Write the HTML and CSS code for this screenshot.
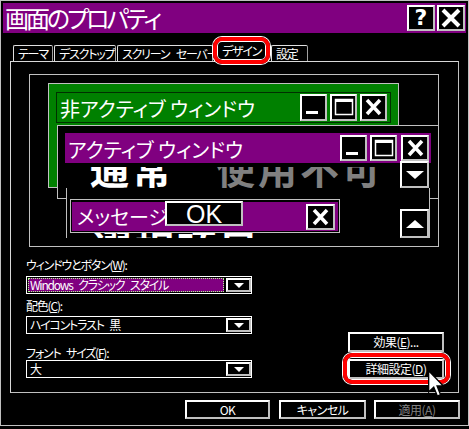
FILE: index.html
```html
<!DOCTYPE html>
<html lang="ja">
<head>
  <meta charset="UTF-8" />
  <title>画面のプロパティ</title>
  <link rel="stylesheet" href="styles.css">
</head>
<body>
  <div class="window">
    <div class="titlebar">
      <span class="title">画面のプロパティ</span>
      <div class="caption-btns">
        <span class="cap-btn help">?</span>
        <span class="cap-btn"><svg width="24" height="22" viewBox="0 0 24 22"><path d="M4 3 L20 19 M20 3 L4 19" stroke="#fff" stroke-width="4"/></svg></span>
      </div>
    </div>

    <div class="tabs">
      <span class="tab t-theme">テーマ</span>
      <span class="tab t-desk">デスクトップ</span>
      <span class="tab t-saver">スクリーン セーバー</span>
      <span class="tab t-design active">デザイン</span>
      <span class="tab t-set">設定</span>
    </div>

    <div class="panel">
      <div class="preview">
        <div class="pv-inactive">
          <div class="pv-title inactive-bar">
            <span>非アクティブ ウィンドウ</span>
            <span class="pv-btns">
              <span class="pv-btn"><svg width="23" height="23" viewBox="0 0 23 23"><rect x="4" y="15" width="12" height="3" fill="#fff"/></svg></span>
              <span class="pv-btn"><svg width="23" height="23" viewBox="0 0 23 23"><rect x="3.5" y="3.5" width="17" height="15" fill="none" stroke="#fff" stroke-width="1.5"/><rect x="3" y="3" width="18" height="3" fill="#fff"/></svg></span>
              <span class="pv-btn"><svg width="23" height="23" viewBox="0 0 23 23"><path d="M5 4 L18 18 M18 4 L5 18" stroke="#fff" stroke-width="3.5"/></svg></span>
            </span>
          </div>
        </div>

        <div class="pv-active">
          <div class="pv-title active-bar">
            <span>アクティブ ウィンドウ</span>
            <span class="pv-btns">
              <span class="pv-btn"><svg width="23" height="23" viewBox="0 0 23 23"><rect x="4" y="15" width="12" height="3" fill="#fff"/></svg></span>
              <span class="pv-btn"><svg width="23" height="23" viewBox="0 0 23 23"><rect x="3.5" y="3.5" width="17" height="15" fill="none" stroke="#fff" stroke-width="1.5"/><rect x="3" y="3" width="18" height="3" fill="#fff"/></svg></span>
              <span class="pv-btn wide"><svg width="24" height="23" viewBox="0 0 24 23"><path d="M6 4 L19 18 M19 4 L6 18" stroke="#fff" stroke-width="3.5"/></svg></span>
            </span>
          </div>
        </div>

        <div class="pv-menu">
          <span class="m-normal">通常</span><span class="m-disabled">使用不可</span>
        </div>

        <div class="pv-client">
          <span class="m-selected">選択項目</span>
        </div>

        <span class="pv-scroll pv-down"><span class="arrow-down"></span></span>
        <span class="pv-scroll pv-up"><span class="arrow-up"></span></span>

        <div class="pv-msg">
          <div class="msg-bar">メッセージ</div>
          <span class="msg-ok">OK</span>
          <span class="pv-btn msg-close"><svg width="25" height="22" viewBox="0 0 25 22"><path d="M6 4 L19 18 M19 4 L6 18" stroke="#fff" stroke-width="3.5"/></svg></span>
        </div>
      </div>

      <div class="options">
        <div class="fields">
          <div class="lbl">ウィンドウとボタン(<u>W</u>):</div>
          <div class="combo">
            <span class="combo-text focused">Windows クラシック スタイル</span>
            <span class="drop"><span class="drop-arrow"></span></span>
          </div>
          <div class="lbl lbl-scheme">配色(<u>C</u>):</div>
          <div class="combo">
            <span class="combo-text">ハイコントラスト 黒</span>
            <span class="drop"><span class="drop-arrow"></span></span>
          </div>
          <div class="lbl lbl-font">フォント サイズ(<u>F</u>):</div>
          <div class="combo">
            <span class="combo-text">大</span>
            <span class="drop"><span class="drop-arrow"></span></span>
          </div>
        </div>
        <div class="side-btns">
          <span class="btn">効果(<u>E</u>)...</span>
          <span class="btn marked">詳細設定(<u>D</u>)</span>
        </div>
      </div>
    </div>

    <div class="footer">
      <span class="btn foot-ok">OK</span>
      <span class="btn foot-cancel">キャンセル</span>
      <span class="btn foot-apply disabled">適用(<u>A</u>)</span>
    </div>

    <svg class="cursor" width="16" height="28" viewBox="0 0 12 21">
      <path d="M0.5 0.5 L0.5 16.5 L4.3 12.8 L7 19.5 L9.4 18.5 L6.8 12 L11.5 12 Z" fill="#fff" stroke="#000" stroke-width="1"/>
    </svg>
  </div>
</body>
</html>
```

FILE: styles.css
```css
* {
  box-sizing: border-box;
}
body {
  margin: 0;
  background: #000;
  color: #fff;
  font-family: "Noto Sans CJK JP", sans-serif;
  font-size: 12px;
  font-feature-settings: "palt";
}
u {
  text-decoration: underline;
  text-underline-offset: 1px;
}
.window {
  position: relative;
  width: 469px;
  height: 426px;
  border: 1px solid #c0c0c0;
  padding: 2px;
  background: #000;
}

/* title bar */
.titlebar {
  display: flex;
  align-items: center;
  justify-content: space-between;
  height: 30px;
  padding: 0 1px 0 2px;
  background: #800080;
}
.title {
  font-size: 24px;
  line-height: 30px;
  letter-spacing: -3px;
}
.caption-btns {
  display: flex;
  gap: 2px;
}
.cap-btn {
  display: flex;
  align-items: center;
  justify-content: center;
  width: 28px;
  height: 26px;
  background: #000;
  border: 2px solid;
  border-color: #fff #c0c0c0 #c0c0c0 #fff;
}
.cap-btn.help {
  font-family: "DejaVu Sans", sans-serif;
  font-weight: bold;
  font-size: 22px;
  line-height: 22px;
}

/* tabs */
.tabs {
  display: flex;
  align-items: flex-end;
  height: 28px;
  padding-left: 10px;
}
.tab {
  position: relative;
  height: 16px;
  margin-right: 1px;
  padding-left: 4px;
  line-height: 15px;
  letter-spacing: -1.2px;
  word-spacing: 5px;
  border: 1px solid #e0e0e0;
  border-bottom: none;
  border-right-color: #a0a0a0;
  border-radius: 2px 2px 0 0;
  white-space: nowrap;
}
.t-theme { width: 40px; }
.t-desk { width: 62px; }
.t-saver { width: 96px; }
.t-set { width: 37px; margin-left: 1px; }
.tab.active {
  z-index: 2;
  width: 55px;
  height: 21px;
  margin-bottom: -1px;
  padding-left: 7px;
  line-height: 18px;
  background: #000;
}
.tab.active::after {
  content: "";
  position: absolute;
  top: -5px;
  left: -2px;
  right: -2px;
  bottom: -2px;
  border: 4px solid #f00;
  border-radius: 9px;
  box-shadow: 0 0 0 1px #fff, inset 0 0 0 1px #fff;
}

/* panel */
.panel {
  height: 332px;
  margin: 0 7px;
  border: 1px solid #d8d8d8;
  border-right-color: #c0c0c0;
  border-bottom-color: #c0c0c0;
}
.preview {
  position: relative;
  width: 410px;
  height: 173px;
  margin: 12px 0 0 18px;
  border: 1px solid #c0c0c0;
  overflow: hidden;
}
.pv-inactive {
  position: absolute;
  left: 18px;
  top: 8px;
  width: 351px;
  height: 105px;
  padding: 8px 7px;
  background: #008000;
  border: 1px solid #c0c0c0;
}
.pv-title {
  display: flex;
  align-items: flex-start;
  justify-content: space-between;
  color: #fff;
  font-size: 20px;
  line-height: 29px;
  white-space: nowrap;
}
.inactive-bar {
  height: 31px;
  padding: 1px 3px 0 3px;
  border: 1px solid #003000;
  background: #008000;
}
.pv-btns {
  display: flex;
  gap: 3px;
}
.pv-btn {
  display: flex;
  align-items: center;
  justify-content: center;
  width: 27px;
  height: 27px;
  background: #000;
  border: 2px solid;
  border-color: #fff #c0c0c0 #c0c0c0 #fff;
}
.pv-btn.wide {
  width: 28px;
  margin-left: 1px;
}
.pv-active {
  position: absolute;
  left: 27px;
  top: 50px;
  width: 400px;
  height: 74px;
  padding: 7px 0 0 7px;
  border: 1px solid #c0c0c0;
  background: #000;
}
.active-bar {
  width: 366px;
  height: 30px;
  padding: 2px 2px 0 3px;
  background: #800080;
}
.active-bar .pv-btn {
  height: 26px;
}
.pv-menu {
  position: absolute;
  left: 36px;
  top: 92px;
  width: 364px;
  height: 21px;
  overflow: hidden;
  padding-left: 24px;
  white-space: nowrap;
}
.m-normal,
.m-disabled,
.m-selected {
  display: inline-block;
  font-size: 39px;
  font-weight: bold;
  line-height: 40px;
  letter-spacing: 3px;
  font-feature-settings: normal;
}
.m-normal,
.m-disabled {
  margin-top: -20px;
}
.m-disabled {
  margin-left: 42px;
  color: #808080;
}
.pv-client {
  position: absolute;
  left: 36px;
  top: 113px;
  width: 364px;
  height: 50px;
  overflow: hidden;
  padding: 38px 0 0 26px;
  background: #000;
  border-left: 1px solid #c0c0c0;
  border-right: 1px solid #c0c0c0;
}
.pv-scroll {
  position: absolute;
  left: 370px;
  display: flex;
  align-items: center;
  justify-content: center;
  width: 29px;
  background: #000;
  border: 2px solid;
  border-color: #fff #c0c0c0 #c0c0c0 #fff;
}
.pv-down {
  top: 86px;
  height: 27px;
}
.pv-up {
  top: 134px;
  height: 29px;
}
.arrow-down {
  border-left: 9px solid transparent;
  border-right: 9px solid transparent;
  border-top: 8px solid #fff;
}
.arrow-up {
  border-left: 9px solid transparent;
  border-right: 9px solid transparent;
  border-bottom: 8px solid #fff;
}
.pv-msg {
  position: absolute;
  left: 40px;
  top: 124px;
  width: 270px;
  height: 34px;
  padding: 2px 1px 1px 1px;
  background: #000;
  border: 1px solid #c0c0c0;
}
.msg-bar {
  height: 29px;
  padding-left: 5px;
  background: #800080;
  font-size: 20px;
  line-height: 29px;
}
.msg-ok {
  position: absolute;
  left: 94px;
  top: 1px;
  width: 78px;
  height: 25px;
  background: #000;
  border: 2px solid;
  border-color: #fff #c0c0c0 #c0c0c0 #fff;
  text-align: center;
  font-family: "Liberation Sans", sans-serif;
  font-size: 25px;
  line-height: 22px;
}
.msg-close {
  position: absolute;
  left: 235px;
  top: 4px;
  width: 29px;
  height: 26px;
}

/* lower options */
.options {
  display: flex;
  justify-content: space-between;
  margin: 10px 14px 0 15px;
}
.fields {
  width: 226px;
  letter-spacing: -1.2px;
  word-spacing: 4px;
}
.lbl {
  height: 16px;
  margin-bottom: 3px;
  line-height: 16px;
  white-space: nowrap;
}
.lbl-scheme {
  margin-top: 4px;
  margin-bottom: 2px;
}
.lbl-font {
  margin-top: 11px;
  margin-bottom: -1px;
}
.combo {
  display: flex;
  height: 18px;
  padding: 1px 0 1px 1px;
  border: 1px solid #fff;
  background: #000;
}
.combo-text {
  flex: 1;
  margin-right: 2px;
  padding-left: 2px;
  line-height: 14px;
  white-space: nowrap;
}
.combo-text.focused {
  background: #800080;
  outline: 1px dotted #b0ff90;
  outline-offset: -1px;
}
.drop {
  display: flex;
  align-items: center;
  justify-content: center;
  width: 25px;
  background: #000;
  border: 2px solid;
  border-color: #fff #c0c0c0 #c0c0c0 #fff;
}
.drop-arrow {
  border-left: 5px solid transparent;
  border-right: 5px solid transparent;
  border-top: 5px solid #fff;
}
.side-btns {
  display: flex;
  flex-direction: column;
  gap: 7px;
  padding-top: 75px;
}
.btn {
  position: relative;
  display: block;
  width: 96px;
  height: 20px;
  background: #000;
  border: 2px solid;
  border-color: #fff #c0c0c0 #c0c0c0 #fff;
  text-align: center;
  line-height: 15px;
  letter-spacing: -0.5px;
  white-space: nowrap;
}
.btn.marked::after {
  content: "";
  position: absolute;
  top: -8px;
  left: -7px;
  right: -8px;
  bottom: -7px;
  border: 4px solid #f00;
  border-radius: 9px;
  box-shadow: 0 0 0 1px #fff, inset 0 0 0 1px #fff;
}

/* footer */
.footer {
  display: flex;
  justify-content: flex-end;
  gap: 9px;
  margin-top: 7px;
  padding-right: 6px;
}
.footer .btn {
  height: 19px;
}
.foot-ok { width: 85px; }
.foot-cancel { width: 87px; }
.foot-apply { width: 86px; margin-left: -1px; }
.btn.disabled {
  color: #808080;
}

.cursor {
  position: absolute;
  left: 427px;
  top: 369px;
}
```
